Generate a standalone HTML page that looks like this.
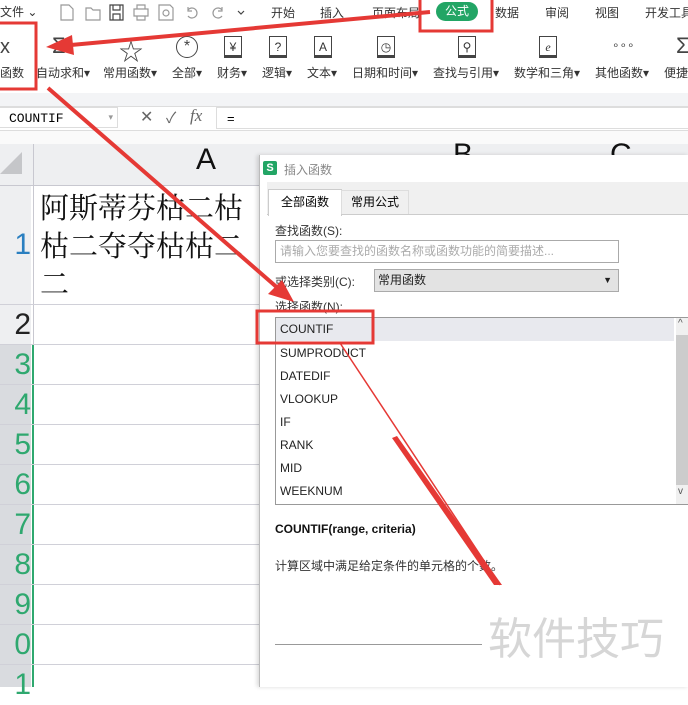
<!DOCTYPE html>
<html><head><meta charset="utf-8"><style>
body{margin:0;width:688px;height:687px;overflow:hidden;position:relative;background:#fff;font-family:"Liberation Sans","Noto Sans CJK SC",sans-serif;}
.a{position:absolute;white-space:nowrap;}
.t{font-size:12px;color:#333;}
.lbl{font-size:12px;color:#333;top:64px;}
.ic{position:absolute;top:36px;width:18px;height:22px;border:1.3px solid #444;border-bottom-width:3px;font-size:12px;text-align:center;line-height:20px;color:#333;box-sizing:border-box;}
.row{position:absolute;left:0;width:259px;height:1px;background:#d0d0d8;}
.rn{position:absolute;left:0;width:31px;font-size:30px;color:#2fa86f;background:#d9dbdf;text-align:right;overflow:hidden;}
.li{position:absolute;left:280px;font-size:12px;color:#222;}
</style></head><body>
<!-- top bar -->
<div class="a t" style="left:0;top:3px;">文件 ⌄</div>
<svg class="a" style="left:58px;top:3px" width="190" height="18" fill="none" stroke="#999" stroke-width="1.2">
<path d="M3 2h8l4 4v11H3z"/><path d="M28 5h5l2 2h7v10H28z"/><path d="M52 2h13v15H52z M55 2v5h7V2 M55 17v-6h7v6" stroke="#444"/>
<path d="M76 6h14v7H76z M79 6V2h8v4 M79 13v4h8v-4"/><path d="M101 2h11l3 3v12h-14z"/><circle cx="108" cy="10" r="3"/>
<path d="M130 7a5 5 0 1 1 0 6 M130 4v4h4"/><path d="M164 7a5 5 0 1 0 0 6 M164 4v4h-4"/><path d="M180 8l3 3 3-3" stroke="#444"/>
</svg>
<div class="a t" style="left:271px;top:4px;">开始</div>
<div class="a t" style="left:320px;top:4px;">插入</div>
<div class="a t" style="left:372px;top:4px;">页面布局</div>
<div class="a" style="left:436px;top:2px;width:42px;height:19px;border-radius:10px;background:#22a565;color:#fff;font-size:12px;text-align:center;line-height:19px;">公式</div>
<div class="a t" style="left:495px;top:4px;">数据</div>
<div class="a t" style="left:545px;top:4px;">审阅</div>
<div class="a t" style="left:595px;top:4px;">视图</div>
<div class="a t" style="left:645px;top:4px;">开发工具</div>
<!-- ribbon -->
<div class="a" style="left:0;top:36px;font-size:20px;color:#444;">x</div>
<div class="a lbl" style="left:0;">函数</div>
<div class="a" style="left:52px;top:33px;font-size:22px;color:#444;">Σ</div>
<div class="a lbl" style="left:36px;">自动求和▾</div>
<div class="a" style="left:119px;top:32px;font-size:24px;color:#444;">☆</div>
<div class="a lbl" style="left:103px;">常用函数▾</div>
<div class="a" style="left:176px;top:36px;width:20px;height:20px;border:1.3px solid #444;border-radius:50%;text-align:center;font-size:16px;line-height:20px;color:#444;">*</div>
<div class="a lbl" style="left:172px;">全部▾</div>
<div class="ic" style="left:224px;">¥</div><div class="a lbl" style="left:217px;">财务▾</div>
<div class="ic" style="left:269px;">?</div><div class="a lbl" style="left:262px;">逻辑▾</div>
<div class="ic" style="left:314px;">A</div><div class="a lbl" style="left:307px;">文本▾</div>
<div class="ic" style="left:377px;">◷</div><div class="a lbl" style="left:352px;">日期和时间▾</div>
<div class="ic" style="left:458px;">⚲</div><div class="a lbl" style="left:433px;">查找与引用▾</div>
<div class="ic" style="left:539px;font-style:italic;font-family:serif;">e</div><div class="a lbl" style="left:514px;">数学和三角▾</div>
<div class="a" style="left:612px;top:38px;font-size:12px;color:#444;">∘∘∘</div><div class="a lbl" style="left:595px;">其他函数▾</div>
<div class="a" style="left:676px;top:33px;font-size:22px;color:#444;">Σ</div><div class="a lbl" style="left:664px;">便捷</div>
<div class="a" style="left:0;top:93px;width:688px;height:13px;background:#f3f4f6;border-bottom:1px solid #ddd;"></div>
<!-- formula bar -->
<div class="a" style="left:-2px;top:107px;width:120px;height:21px;border:1px solid #ddd;font-family:'Liberation Mono',monospace;font-size:13px;line-height:21px;padding-left:10px;box-sizing:border-box;">COUNTIF<span style="position:absolute;right:4px;color:#999;font-size:9px;">▾</span></div>
<div class="a" style="left:140px;top:107px;font-size:16px;color:#666;">✕</div>
<div class="a" style="left:166px;top:107px;font-size:15px;color:#666;">✓</div>
<div class="a" style="left:190px;top:106px;font-size:17px;color:#666;font-style:italic;font-family:'Liberation Serif',serif;">fx</div>
<div class="a" style="left:216px;top:107px;width:480px;height:22px;border:1px solid #ddd;font-size:13px;line-height:21px;padding-left:10px;box-sizing:border-box;">=</div>
<div class="a" style="left:0;top:130px;width:688px;height:1px;background:#ddd;"></div>
<div class="a" style="left:0;top:131px;width:688px;height:13px;background:#fafafa;"></div>
<!-- sheet -->
<div class="a" style="left:0;top:144px;width:688px;height:41px;background:#eeeff1;border-bottom:1px solid #c8c8d0;"></div>
<svg class="a" style="left:0;top:150px" width="24" height="26"><path d="M22 2V24H0z" fill="#c5c6c9"/></svg>
<div class="a" style="left:33px;top:144px;width:1px;height:543px;background:#c8c8d0;"></div>
<div class="a" style="left:196px;top:143px;font-size:30px;color:#111;">A</div>
<div class="a" style="left:453px;top:138px;font-size:30px;color:#111;">B</div>
<div class="a" style="left:610px;top:138px;font-size:30px;color:#111;">C</div>
<div class="a" style="left:40px;top:188px;width:222px;font-size:29px;line-height:38px;color:#111;white-space:normal;font-family:'Noto Serif CJK SC',serif;">阿斯蒂芬枯二枯枯二夺夺枯枯二二</div>
<div class="rn" style="top:186px;height:118px;background:#eeeff1;color:#2a7fc0;line-height:118px;">1</div>
<div class="rn" style="top:305px;height:39px;background:#eeeff1;color:#222;line-height:39px;">2</div>
<div class="rn" style="top:345px;height:342px;"></div>
<div class="a" style="left:32px;top:345px;width:2px;height:342px;background:#2fa86f;"></div>
<div class="rn" style="top:345px;height:40px;line-height:40px;background:none;">3</div>
<div class="rn" style="top:385px;height:40px;line-height:40px;background:none;">4</div>
<div class="rn" style="top:425px;height:40px;line-height:40px;background:none;">5</div>
<div class="rn" style="top:465px;height:40px;line-height:40px;background:none;">6</div>
<div class="rn" style="top:505px;height:40px;line-height:40px;background:none;">7</div>
<div class="rn" style="top:545px;height:40px;line-height:40px;background:none;">8</div>
<div class="rn" style="top:585px;height:40px;line-height:40px;background:none;">9</div>
<div class="rn" style="top:625px;height:40px;line-height:40px;background:none;">0</div>
<div class="rn" style="top:665px;height:40px;line-height:40px;background:none;">1</div>
<div class="row" style="top:304px"></div><div class="row" style="top:344px"></div><div class="row" style="top:384px"></div><div class="row" style="top:424px"></div><div class="row" style="top:464px"></div><div class="row" style="top:504px"></div><div class="row" style="top:544px"></div><div class="row" style="top:584px"></div><div class="row" style="top:624px"></div><div class="row" style="top:664px"></div>
<!-- dialog -->
<div class="a" style="left:259px;top:155px;width:429px;height:532px;background:#fff;border-left:1px solid #bbb;box-shadow:-2px 0 4px rgba(0,0,0,.15);"></div>
<div class="a" style="left:263px;top:161px;width:14px;height:14px;background:#22a565;border-radius:2px;color:#fff;font-size:11px;font-weight:bold;text-align:center;line-height:14px;">S</div>
<div class="a" style="left:284px;top:161px;font-size:12px;color:#888;">插入函数</div>
<div class="a" style="left:267px;top:182px;width:421px;height:32px;background:#f0f0f0;border-bottom:1px solid #ccc;"></div>
<div class="a" style="left:268px;top:189px;width:72px;height:26px;background:#fff;border:1px solid #ccc;border-bottom:none;font-size:12px;text-align:center;line-height:24px;">全部函数</div>
<div class="a" style="left:341px;top:190px;width:66px;height:23px;border:1px solid #ddd;border-bottom:none;font-size:12px;text-align:center;line-height:23px;">常用公式</div>
<div class="a t" style="left:275px;top:222px;">查找函数(S):</div>
<div class="a" style="left:275px;top:240px;width:344px;height:23px;border:1px solid #aaa;box-sizing:border-box;font-size:12px;color:#aaa;line-height:21px;padding-left:4px;">请输入您要查找的函数名称或函数功能的简要描述...</div>
<div class="a t" style="left:275px;top:273px;">或选择类别(C):</div>
<div class="a" style="left:374px;top:269px;width:245px;height:23px;border:1px solid #aaa;background:#e3e3e3;box-sizing:border-box;font-size:12px;color:#222;line-height:21px;padding-left:3px;">常用函数<span style="position:absolute;right:6px;font-size:9px;">▼</span></div>
<div class="a t" style="left:275px;top:298px;">选择函数(N):</div>
<div class="a" style="left:275px;top:317px;width:413px;height:188px;border:1px solid #999;box-sizing:border-box;"></div>
<div class="a" style="left:276px;top:318px;width:398px;height:23px;background:#e8e9ee;"></div>
<div class="a" style="left:676px;top:318px;width:12px;height:186px;background:#f0f0f0;"></div>
<div class="a" style="left:676px;top:335px;width:12px;height:150px;background:#ccc;"></div>
<div class="a" style="left:678px;top:318px;font-size:10px;color:#555;">^</div>
<div class="a" style="left:678px;top:486px;font-size:10px;color:#555;">v</div>
<div class="li" style="top:322px">COUNTIF</div><div class="li" style="top:346px">SUMPRODUCT</div><div class="li" style="top:369px">DATEDIF</div><div class="li" style="top:392px">VLOOKUP</div><div class="li" style="top:415px">IF</div><div class="li" style="top:438px">RANK</div><div class="li" style="top:461px">MID</div><div class="li" style="top:484px">WEEKNUM</div>
<div class="a" style="left:275px;top:522px;font-size:12px;font-weight:bold;color:#111;">COUNTIF(range, criteria)</div>
<div class="a t" style="left:275px;top:557px;">计算区域中满足给定条件的单元格的个数。</div>
<div class="a" style="left:275px;top:644px;width:207px;height:1px;background:#999;"></div>
<div class="a" style="left:488px;top:603px;font-size:44px;color:#d6d6d6;">软件技巧</div>
<!-- annotations -->
<svg class="a" style="left:0;top:0" width="688" height="687">
<g fill="none" stroke="#e53935" stroke-width="3">
<rect x="420" y="-2" width="72" height="33"/>
<rect x="-2" y="23" width="38" height="66"/>
<rect x="257" y="311" width="116" height="32"/>
</g>
<line x1="430" y1="12" x2="60" y2="46" stroke="#e53935" stroke-width="4"/>
<path d="M46 47l26-12 2 20z" fill="#e53935"/>
<line x1="48" y1="88" x2="280" y2="290" stroke="#e53935" stroke-width="4"/>
<path d="M294 302l-26-8 14-14z" fill="#e53935"/>
<line x1="340" y1="343" x2="500" y2="585" stroke="#e53935" stroke-width="1.5"/>
<path d="M397 436L502 585l-8 0L392 438z" fill="#e53935"/>
</svg>
</body></html>
